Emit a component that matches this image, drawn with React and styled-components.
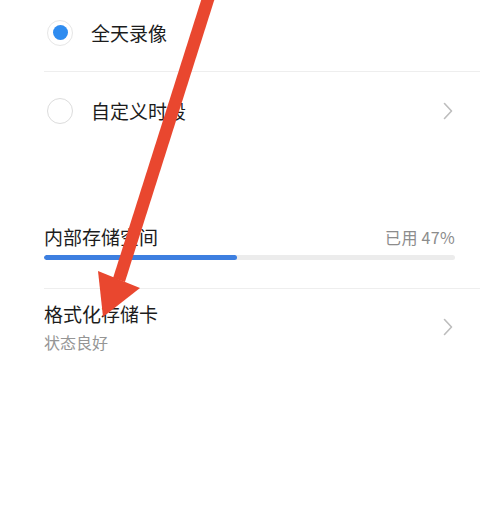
import React from "react";
import styled, { createGlobalStyle } from "styled-components";

const Global = createGlobalStyle`
  html, body { margin: 0; padding: 0; background: #fff; }
  body {
    font-family: "Noto Sans CJK SC", "Noto Sans", sans-serif;
    color: #1c1c1c;
    overflow: hidden;
  }
`;

const Page = styled.div`
  position: relative;
  width: 488px;
  height: 514px;
  overflow: hidden;
  background: #fff;
`;

const List = styled.div`
  margin: -6px 8px 0 44px;
  display: flex;
  flex-direction: column;
`;

const Divider = styled.div`
  height: 1px;
  background: #eeeeee;
`;

const OptionRow = styled.div`
  height: 77px;
  display: flex;
  align-items: center;
  padding: 0 26px 0 3px;
  gap: 18px;
`;

const Radio = styled.span`
  width: 26px;
  height: 26px;
  box-sizing: border-box;
  border-radius: 50%;
  border: 1.5px solid ${(p) => (p.$on ? "#e6e6e6" : "#dcdcdc")};
  display: flex;
  align-items: center;
  justify-content: center;
  flex: none;
  &::after {
    content: "";
    width: 15px;
    height: 15px;
    border-radius: 50%;
    background: ${(p) => (p.$on ? "#2f8cf0" : "transparent")};
  }
`;

const Label = styled.span`
  flex: 1;
  font-size: 19px;
  line-height: 28px;
  color: #1c1c1c;
`;

const Chevron = () => (
  <svg width="12" height="20" viewBox="0 0 12 20" fill="none">
    <path d="M2.5 2.5 L9.5 10 L2.5 17.5" stroke="#bdbdbd" strokeWidth="1.6" strokeLinecap="round" strokeLinejoin="round" />
  </svg>
);

const Storage = styled.div`
  margin-top: 74px;
  padding: 0 25px 28px 0;
  display: flex;
  flex-direction: column;
  gap: 4px;
`;

const StorageHead = styled.div`
  display: flex;
  align-items: center;
  justify-content: space-between;
  height: 28px;
`;

const Usage = styled.span`
  font-size: 16px;
  color: #8c8c8c;
  letter-spacing: 0.3px;
`;

const Track = styled.div`
  height: 5px;
  border-radius: 3px;
  background: #ececec;
  overflow: hidden;
`;

const Fill = styled.div`
  height: 100%;
  border-radius: 3px;
  background: #3d7fe0;
`;

const FormatRow = styled.div`
  display: flex;
  align-items: center;
  padding: 11px 26px 14px 0;
`;

const FormatText = styled.div`
  flex: 1;
  display: flex;
  flex-direction: column;
  gap: 3px;
`;

const Sub = styled.span`
  font-size: 16px;
  line-height: 22px;
  color: #959595;
`;

const Pointer = styled.svg`
  position: absolute;
  left: 0;
  top: 0;
  pointer-events: none;
`;

export default function App() {
  const used = 47;
  return (
    <Page>
      <Global />
      <List>
        <OptionRow>
          <Radio $on />
          <Label>全天录像</Label>
        </OptionRow>
        <Divider />
        <OptionRow>
          <Radio />
          <Label>自定义时段</Label>
          <Chevron />
        </OptionRow>
        <Storage>
          <StorageHead>
            <Label>内部存储空间</Label>
            <Usage>已用 {used}%</Usage>
          </StorageHead>
          <Track>
            <Fill style={{ width: `${used}%` }} />
          </Track>
        </Storage>
        <Divider />
        <FormatRow>
          <FormatText>
            <Label>格式化存储卡</Label>
            <Sub>状态良好</Sub>
          </FormatText>
          <Chevron />
        </FormatRow>
      </List>
      <Pointer width="488" height="514" viewBox="0 0 488 514">
        <line x1="209" y1="-4" x2="119" y2="280" stroke="#e9472f" strokeWidth="12.5" />
        <polygon points="98,271 140,288 103,317" fill="#e9472f" />
      </Pointer>
    </Page>
  );
}
